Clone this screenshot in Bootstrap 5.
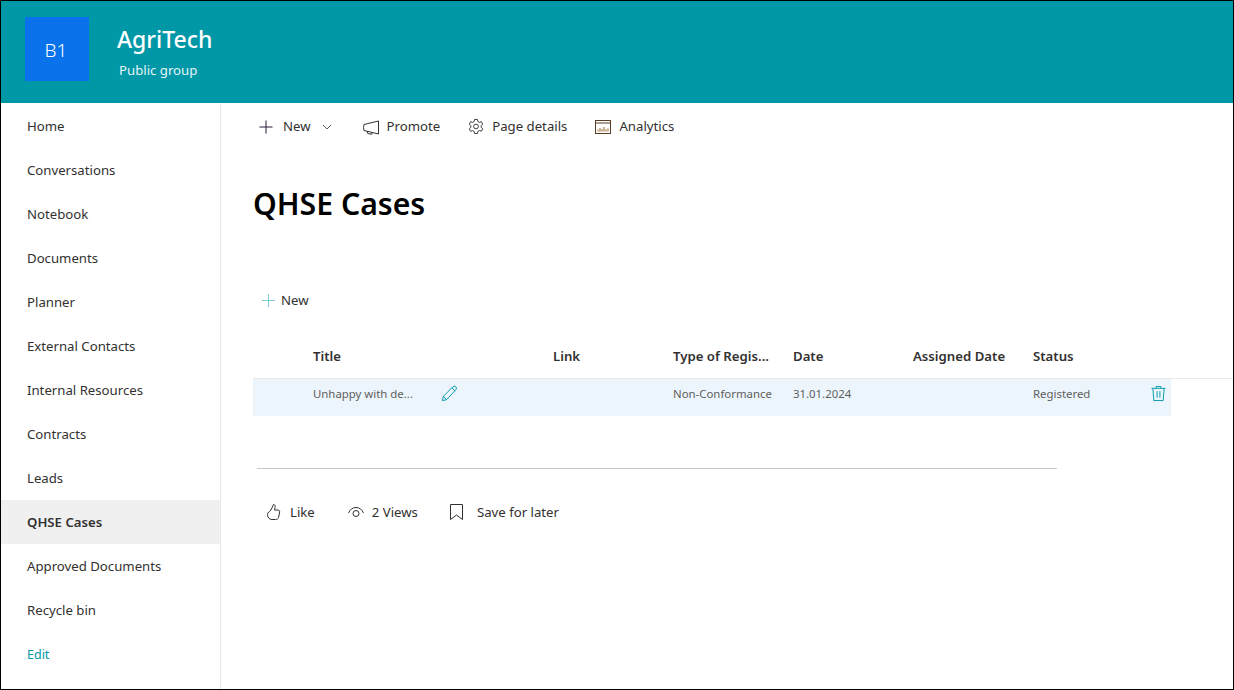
<!DOCTYPE html>
<html lang="en">

<head>
    <meta charset="UTF-8">
    <meta name="viewport" content="width=device-width, initial-scale=1.0">
    <title>QHSE Cases - AgriTech</title>

    <link href="https://cdn.jsdelivr.net/npm/bootstrap@5.3.0/dist/css/bootstrap.min.css" rel="stylesheet">
    <script src="https://cdn.jsdelivr.net/npm/bootstrap@5.3.0/dist/js/bootstrap.bundle.min.js"></script>

    <style>
        html, body { height: 100%; overflow: hidden; }
        body { font-family: "Noto Sans", "Open Sans", sans-serif; font-size: 13.2px; color: #323130; background: #fff; }
        .app-frame { width: 1234px; height: 690px; border: 1px solid #000; }
        .site-head { height: 102px; margin-bottom: 1px; background: #0097a7; color: #fff; padding: 16px 0 0 24px; }
        .site-logo { width: 64px; height: 64px; background: #0a72ea; font-size: 19px; font-weight: 300; padding: 2px 2px 0 0; }
        .site-text { margin-left: 28px; }
        .site-name { font-size: 23px; font-weight: 500; line-height: 32px; margin-top: 6px; }
        .site-type { font-size: 13.2px; line-height: 20px; margin: 5px 0 0 2px; color: #e6f5f6; }
        .side-nav { width: 220px; border-right: 1px solid #e8e8e8; }
        .side-link { height: 44px; padding: 2px 0 0 26px; color: #323130; text-decoration: none; }
        .side-link.is-active { background: #f0f0f0; font-weight: 600; }
        .side-link.is-edit { color: #0097a7; font-size: 12.5px; }
        .page-area { min-width: 0; }
        .cmd-bar { height: 44px; padding: 2px 0 0 37px; gap: 28px; }
        .cmd-item { gap: 8px; }
        .cmd-item svg { flex: none; }
        .chev-icon { margin-left: 3px; margin-right: 2px; }
        .page-title { font-size: 30.2px; font-weight: 600; line-height: 40px; color: #000; margin: 36px 0 0 32px; }
        .new-row { margin: 64px 0 0 40px; height: 24px; gap: 5px; }
        .new-row span, .foot-item span { padding-top: 2px; }
        .case-head { height: 44px; margin: 23px 0 0 32px; border-bottom: 1px solid #e9e9e9; font-weight: 600; }
        .case-row { width: 918px; height: 37px; margin-left: 32px; padding-bottom: 8px; background: #edf5fc; font-size: 11.4px; color: #605e5c; position: relative; }
        .cell-title { width: 300px; padding-left: 60px; }
        .cell-plain { width: 120px; }
        .cell-status { width: 120px; }
        .pen-icon { margin-left: 28px; }
        .bin-icon { position: absolute; left: 898px; top: 6px; }
        .foot-rule { width: 800px; height: 1px; background: #c8c8c8; margin: 52px 0 0 36px; }
        .foot-bar { margin: 31px 0 0 45px; height: 24px; gap: 33px; }
        .foot-item { gap: 8px; }
        .save-item { margin-left: -1px; }
        .save-icon { margin-right: 6px; }
    </style>
</head>

<body>
    <div class="app-frame d-flex flex-column">
        <header class="site-head d-flex align-items-start">
            <div class="site-logo d-flex align-items-center justify-content-center">B1</div>
            <div class="site-text">
                <div class="site-name">AgriTech</div>
                <div class="site-type">Public group</div>
            </div>
        </header>

        <div class="d-flex flex-grow-1">
            <nav class="side-nav flex-shrink-0">
                <a class="side-link d-flex align-items-center" href="#">Home</a>
                <a class="side-link d-flex align-items-center" href="#">Conversations</a>
                <a class="side-link d-flex align-items-center" href="#">Notebook</a>
                <a class="side-link d-flex align-items-center" href="#">Documents</a>
                <a class="side-link d-flex align-items-center" href="#">Planner</a>
                <a class="side-link d-flex align-items-center" href="#">External Contacts</a>
                <a class="side-link d-flex align-items-center" href="#">Internal Resources</a>
                <a class="side-link d-flex align-items-center" href="#">Contracts</a>
                <a class="side-link d-flex align-items-center" href="#">Leads</a>
                <a class="side-link is-active d-flex align-items-center" href="#">QHSE Cases</a>
                <a class="side-link d-flex align-items-center" href="#">Approved Documents</a>
                <a class="side-link d-flex align-items-center" href="#">Recycle bin</a>
                <a class="side-link is-edit d-flex align-items-center" href="#">Edit</a>
            </nav>

            <main class="page-area flex-grow-1">
                <div class="cmd-bar d-flex align-items-center">
                    <div class="cmd-item d-flex align-items-center">
                        <svg width="17" height="16" viewBox="0 0 17 16" fill="none" stroke="#2b1b3d"><path d="M8 1.500v13M1.500 8h13"/></svg>
                        <span>New</span>
                        <svg class="chev-icon" width="10" height="10" viewBox="0 0 10 10" fill="none" stroke="#605e5c"><path d="M1 3l4 4 4-4"/></svg>
                    </div>
                    <div class="cmd-item d-flex align-items-center">
                        <svg width="17" height="16" viewBox="0 0 17 16" fill="none" stroke="#323130"><path d="M16.500 2v13L2 11.500Q1 8.500 2 5.500zM5 12.300l.7 2.200 4 .8.500-1.600"/></svg>
                        <span>Promote</span>
                    </div>
                    <div class="cmd-item d-flex align-items-center">
                        <svg width="16" height="17" viewBox="0 0 17 17" fill="none" stroke="#323130"><circle cx="8.500" cy="8.500" r="2.500"/><path d="M7 1h3l.5 2.200 1.600.9 2.100-.7 1.400 2.600-1.600 1.500v1.900l1.600 1.500-1.400 2.600-2.100-.7-1.600.9L10 16H7l-.5-2.200-1.600-.9-2.100.7-1.400-2.600L3 9.500v-1.900L1.400 6l1.400-2.600 2.100.7 1.600-.9z"/></svg>
                        <span>Page details</span>
                    </div>
                    <div class="cmd-item d-flex align-items-center">
                        <svg width="16" height="14" viewBox="0 0 16 14" fill="none"><rect x=".5" y=".5" width="15" height="13" stroke="#5a3d22"/><path d="M.5 3h15" stroke="#5a3d22"/><path d="M3 11.500v-2M5 11.500v-3.500M7 11.500v-2.500M9 11.500v-4.500M11 11.500v-2M13 11.500v-3" stroke="#9a6428"/></svg>
                        <span>Analytics</span>
                    </div>
                </div>

                <h1 class="page-title">QHSE Cases</h1>

                <div class="new-row d-flex align-items-center">
                    <svg width="15" height="15" viewBox="0 0 15 15" fill="none" stroke="#7fcbd3"><path d="M7.500 1v13M1 7.500h13"/></svg>
                    <span>New</span>
                </div>

                <div class="case-head d-flex align-items-center">
                    <div class="cell-title">Title</div>
                    <div class="cell-plain">Link</div>
                    <div class="cell-plain">Type of Regis...</div>
                    <div class="cell-plain">Date</div>
                    <div class="cell-plain">Assigned Date</div>
                    <div class="cell-status">Status</div>
                </div>
                <div class="case-row d-flex align-items-center">
                    <div class="cell-title d-flex align-items-center">
                        <span>Unhappy with de...</span>
                        <svg class="pen-icon" width="17" height="17" viewBox="0 0 18 18" fill="none" stroke="#0097a7"><path d="M1.500 16.500l1-4.500L12.500 2a2.100 2.100 0 0 1 3.300 2.800L6 15.500zM2.500 12L6 15.500M11.500 3l3.500 3.500"/></svg>
                    </div>
                    <div class="cell-plain"></div>
                    <div class="cell-plain">Non-Conformance</div>
                    <div class="cell-plain">31.01.2024</div>
                    <div class="cell-plain"></div>
                    <div class="cell-status">Registered</div>
                    <svg class="bin-icon" width="15" height="17" viewBox="0 0 16 18" fill="none" stroke="#0097a7"><path d="M.5 3.500h15M5.500 3.500V1.500h5v2M2 3.500l1 13h10l1-13M6.500 6.500v7M9.500 6.500v7"/></svg>
                </div>

                <div class="foot-rule"></div>

                <div class="foot-bar d-flex align-items-center">
                    <div class="foot-item d-flex align-items-center">
                        <svg width="16" height="18" viewBox="0 0 16 18" fill="none" stroke="#323130"><path d="M1.500 11.500c0-2 2-3 3.500-4.500L7.500 1.500c1.500 0 2 1.500 1.500 3L8.500 7h3.500c1.500 0 2 1.500 1.500 3l-1 4.500c-.5 1.500-1.500 2-3 2H6c-2.500 0-4.500-2-4.500-5z"/></svg>
                        <span>Like</span>
                    </div>
                    <div class="foot-item d-flex align-items-center">
                        <svg width="16" height="12" viewBox="0 0 16 12" fill="none" stroke="#323130"><path d="M.5 7C2 3.500 4.500 1.500 8 1.500S14 3.500 15.500 7"/><circle cx="8" cy="7.500" r="3"/></svg>
                        <span>2 Views</span>
                    </div>
                    <div class="foot-item save-item d-flex align-items-center">
                        <svg class="save-icon" width="13" height="16" viewBox="0 0 13 16" fill="none" stroke="#323130"><path d="M.5 .5h12v15L6.500 11 .5 15.500z"/></svg>
                        <span>Save for later</span>
                    </div>
                </div>
            </main>
        </div>
    </div>
</body>

</html>
